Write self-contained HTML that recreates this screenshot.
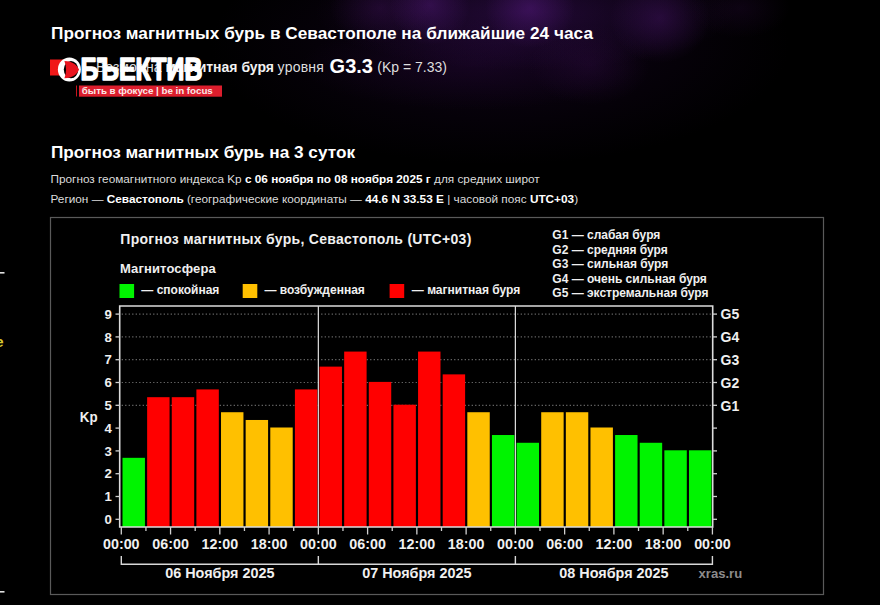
<!DOCTYPE html>
<html><head><meta charset="utf-8"><title>Прогноз магнитных бурь</title>
<style>
html,body{margin:0;padding:0;}
body{width:880px;height:605px;overflow:hidden;position:relative;background:#000;
font-family:"Liberation Sans",sans-serif;}
.bg{position:absolute;left:0;top:0;width:880px;height:605px;
background:
radial-gradient(ellipse 40px 40px at 430px 5px, rgba(105,32,155,0.35), rgba(0,0,0,0) 100%),
radial-gradient(ellipse 45px 40px at 530px 8px, rgba(105,32,155,0.35), rgba(0,0,0,0) 100%),
radial-gradient(ellipse 50px 45px at 660px 18px, rgba(85,24,125,0.35), rgba(0,0,0,0) 100%),
radial-gradient(ellipse 50px 35px at 380px 8px, rgba(75,20,105,0.3), rgba(0,0,0,0) 100%),
radial-gradient(ellipse 60px 40px at 590px 65px, rgba(50,12,72,0.35), rgba(0,0,0,0) 100%),
radial-gradient(ellipse 210px 58px at 525px 12px, rgba(72,20,112,0.38), rgba(0,0,0,0) 100%),
radial-gradient(ellipse 170px 45px at 470px 65px, rgba(40,8,60,0.35), rgba(0,0,0,0) 100%),
radial-gradient(ellipse 50px 30px at 740px 8px, rgba(35,8,50,0.35), rgba(0,0,0,0) 100%),
radial-gradient(ellipse 290px 120px at 500px 45px, rgba(30,6,48,0.45), rgba(0,0,0,0) 100%),
#000;}
svg{position:absolute;left:0;top:0;}
svg text{font-family:"Liberation Sans",sans-serif;}
</style></head>
<body><div class="bg"></div>
<svg width="880" height="605" viewBox="0 0 880 605">
<text x="51" y="39" font-size="17.2" font-weight="bold" fill="#ffffff" textLength="542" lengthAdjust="spacing">Прогноз магнитных бурь в Севастополе на ближайшие 24 часа</text>
<rect x="50" y="59.5" width="16" height="16" fill="#f01818"/>
<text x="274" y="72.3" font-size="14" font-weight="bold" fill="#f2f2f2" text-anchor="end"><tspan font-weight="normal" fill="#dedede">Возможна </tspan>магнитная буря</text>
<text x="277.6" y="72.3" font-size="14" fill="#dedede" textLength="46.2" lengthAdjust="spacing">уровня</text>
<text x="329.6" y="73.3" font-size="20" font-weight="bold" fill="#ffffff">G3.3</text>
<text x="377.3" y="72.3" font-size="14" fill="#dedede">(Kp = 7.33)</text>
<text x="51" y="157.5" font-size="17.2" font-weight="bold" fill="#ffffff" textLength="304" lengthAdjust="spacing">Прогноз магнитных бурь на 3 суток</text>
<text x="50.5" y="183.4" font-size="11.8" fill="#dcdcdc">Прогноз геомагнитного индекса Kp <tspan font-weight="bold" fill="#fff">с 06 ноября по 08 ноября 2025 г</tspan> для средних широт</text>
<text x="50.5" y="203" font-size="11.8" fill="#dcdcdc">Регион — <tspan font-weight="bold" fill="#fff">Севастополь</tspan> (географические координаты — <tspan font-weight="bold" fill="#fff">44.6 N 33.53 E</tspan> | часовой пояс <tspan font-weight="bold" fill="#fff">UTC+03</tspan>)</text>
<ellipse cx="69.4" cy="69.6" rx="11.5" ry="12" fill="#ffffff"/>
<ellipse cx="71" cy="69.6" rx="7.2" ry="8.6" fill="#000"/>
<path d="M64.4 60.9 C73 61 77.2 65.2 79 69.6 C77.2 74 73 78.2 64.4 78.3 C66.6 73 66.6 66.2 64.4 60.9 Z" fill="#e8141e"/>
<text x="80.4" y="80.3" font-size="31" font-weight="bold" fill="#ffffff" stroke="#ffffff" stroke-width="1.5" stroke-linejoin="round" textLength="122" lengthAdjust="spacingAndGlyphs">БЪЕКТИВ</text>
<rect x="76" y="85.5" width="1" height="11" fill="#c8141e"/>
<rect x="79" y="85.5" width="143" height="11.2" fill="#dc1e2d"/>
<text x="81.8" y="94.2" font-size="9.8" font-weight="bold" fill="#fbe8e8" textLength="131" lengthAdjust="spacing">быть в фокусе | be in focus</text>
<rect x="0" y="272" width="4.5" height="1.6" fill="#e0e0e0"/>
<rect x="0" y="591" width="4.5" height="1.6" fill="#e0e0e0"/>
<text x="-5" y="347" font-size="15.5" font-weight="bold" fill="#d8c830">е</text>
<rect x="50.5" y="217.5" width="773" height="377" fill="none" stroke="#5a5a5a" stroke-width="1.2"/>
<line x1="121.7" y1="405.30" x2="711.7" y2="405.30" stroke="#6e6e6e" stroke-width="1.2" stroke-dasharray="1.2 2.3"/>
<line x1="121.7" y1="382.50" x2="711.7" y2="382.50" stroke="#6e6e6e" stroke-width="1.2" stroke-dasharray="1.2 2.3"/>
<line x1="121.7" y1="359.70" x2="711.7" y2="359.70" stroke="#6e6e6e" stroke-width="1.2" stroke-dasharray="1.2 2.3"/>
<line x1="121.7" y1="336.90" x2="711.7" y2="336.90" stroke="#6e6e6e" stroke-width="1.2" stroke-dasharray="1.2 2.3"/>
<line x1="121.7" y1="314.10" x2="711.7" y2="314.10" stroke="#6e6e6e" stroke-width="1.2" stroke-dasharray="1.2 2.3"/>
<rect x="122.50" y="457.82" width="22.43" height="69.18" fill="#00f400"/>
<rect x="147.13" y="397.18" width="22.43" height="129.82" fill="#ff0000"/>
<rect x="171.76" y="397.18" width="22.43" height="129.82" fill="#ff0000"/>
<rect x="196.39" y="389.42" width="22.43" height="137.58" fill="#ff0000"/>
<rect x="221.02" y="412.22" width="22.43" height="114.78" fill="#ffc000"/>
<rect x="245.65" y="419.98" width="22.43" height="107.02" fill="#ffc000"/>
<rect x="270.28" y="427.50" width="22.43" height="99.50" fill="#ffc000"/>
<rect x="294.91" y="389.42" width="22.43" height="137.58" fill="#ff0000"/>
<rect x="319.54" y="366.62" width="22.43" height="160.38" fill="#ff0000"/>
<rect x="344.17" y="351.58" width="22.43" height="175.42" fill="#ff0000"/>
<rect x="368.80" y="381.90" width="22.43" height="145.10" fill="#ff0000"/>
<rect x="393.43" y="404.70" width="22.43" height="122.30" fill="#ff0000"/>
<rect x="418.06" y="351.58" width="22.43" height="175.42" fill="#ff0000"/>
<rect x="442.69" y="374.38" width="22.43" height="152.62" fill="#ff0000"/>
<rect x="467.32" y="412.22" width="22.43" height="114.78" fill="#ffc000"/>
<rect x="491.95" y="435.02" width="22.43" height="91.98" fill="#00f400"/>
<rect x="516.58" y="442.78" width="22.43" height="84.22" fill="#00f400"/>
<rect x="541.21" y="412.22" width="22.43" height="114.78" fill="#ffc000"/>
<rect x="565.84" y="412.22" width="22.43" height="114.78" fill="#ffc000"/>
<rect x="590.47" y="427.50" width="22.43" height="99.50" fill="#ffc000"/>
<rect x="615.10" y="435.02" width="22.43" height="91.98" fill="#00f400"/>
<rect x="639.73" y="442.78" width="22.43" height="84.22" fill="#00f400"/>
<rect x="664.36" y="450.30" width="22.43" height="76.70" fill="#00f400"/>
<rect x="688.99" y="450.30" width="22.43" height="76.70" fill="#00f400"/>
<line x1="318.34" y1="306" x2="318.34" y2="527" stroke="#e0e0e0" stroke-width="1.2"/>
<line x1="515.38" y1="306" x2="515.38" y2="527" stroke="#e0e0e0" stroke-width="1.2"/>
<path d="M119.7 527 V306 H712.7 V527 Z" fill="none" stroke="#dcdcdc" stroke-width="1.6"/>
<line x1="115.5" y1="519.30" x2="119.7" y2="519.30" stroke="#cfcfcf" stroke-width="1.3"/>
<line x1="712.7" y1="519.30" x2="717" y2="519.30" stroke="#cfcfcf" stroke-width="1.3"/>
<text x="111.8" y="524.00" text-anchor="end" font-size="13.2" font-weight="bold" fill="#f0f0f0">0</text>
<line x1="115.5" y1="496.50" x2="119.7" y2="496.50" stroke="#cfcfcf" stroke-width="1.3"/>
<line x1="712.7" y1="496.50" x2="717" y2="496.50" stroke="#cfcfcf" stroke-width="1.3"/>
<text x="111.8" y="501.20" text-anchor="end" font-size="13.2" font-weight="bold" fill="#f0f0f0">1</text>
<line x1="115.5" y1="473.70" x2="119.7" y2="473.70" stroke="#cfcfcf" stroke-width="1.3"/>
<line x1="712.7" y1="473.70" x2="717" y2="473.70" stroke="#cfcfcf" stroke-width="1.3"/>
<text x="111.8" y="478.40" text-anchor="end" font-size="13.2" font-weight="bold" fill="#f0f0f0">2</text>
<line x1="115.5" y1="450.90" x2="119.7" y2="450.90" stroke="#cfcfcf" stroke-width="1.3"/>
<line x1="712.7" y1="450.90" x2="717" y2="450.90" stroke="#cfcfcf" stroke-width="1.3"/>
<text x="111.8" y="455.60" text-anchor="end" font-size="13.2" font-weight="bold" fill="#f0f0f0">3</text>
<line x1="115.5" y1="428.10" x2="119.7" y2="428.10" stroke="#cfcfcf" stroke-width="1.3"/>
<line x1="712.7" y1="428.10" x2="717" y2="428.10" stroke="#cfcfcf" stroke-width="1.3"/>
<text x="111.8" y="432.80" text-anchor="end" font-size="13.2" font-weight="bold" fill="#f0f0f0">4</text>
<line x1="115.5" y1="405.30" x2="119.7" y2="405.30" stroke="#cfcfcf" stroke-width="1.3"/>
<line x1="712.7" y1="405.30" x2="717" y2="405.30" stroke="#cfcfcf" stroke-width="1.3"/>
<text x="111.8" y="410.00" text-anchor="end" font-size="13.2" font-weight="bold" fill="#f0f0f0">5</text>
<line x1="115.5" y1="382.50" x2="119.7" y2="382.50" stroke="#cfcfcf" stroke-width="1.3"/>
<line x1="712.7" y1="382.50" x2="717" y2="382.50" stroke="#cfcfcf" stroke-width="1.3"/>
<text x="111.8" y="387.20" text-anchor="end" font-size="13.2" font-weight="bold" fill="#f0f0f0">6</text>
<line x1="115.5" y1="359.70" x2="119.7" y2="359.70" stroke="#cfcfcf" stroke-width="1.3"/>
<line x1="712.7" y1="359.70" x2="717" y2="359.70" stroke="#cfcfcf" stroke-width="1.3"/>
<text x="111.8" y="364.40" text-anchor="end" font-size="13.2" font-weight="bold" fill="#f0f0f0">7</text>
<line x1="115.5" y1="336.90" x2="119.7" y2="336.90" stroke="#cfcfcf" stroke-width="1.3"/>
<line x1="712.7" y1="336.90" x2="717" y2="336.90" stroke="#cfcfcf" stroke-width="1.3"/>
<text x="111.8" y="341.60" text-anchor="end" font-size="13.2" font-weight="bold" fill="#f0f0f0">8</text>
<line x1="115.5" y1="314.10" x2="119.7" y2="314.10" stroke="#cfcfcf" stroke-width="1.3"/>
<line x1="712.7" y1="314.10" x2="717" y2="314.10" stroke="#cfcfcf" stroke-width="1.3"/>
<text x="111.8" y="318.80" text-anchor="end" font-size="13.2" font-weight="bold" fill="#f0f0f0">9</text>
<text x="720.5" y="410.50" font-size="14" font-weight="bold" fill="#f0f0f0">G1</text>
<text x="720.5" y="387.70" font-size="14" font-weight="bold" fill="#f0f0f0">G2</text>
<text x="720.5" y="364.90" font-size="14" font-weight="bold" fill="#f0f0f0">G3</text>
<text x="720.5" y="342.10" font-size="14" font-weight="bold" fill="#f0f0f0">G4</text>
<text x="720.5" y="319.30" font-size="14" font-weight="bold" fill="#f0f0f0">G5</text>
<text x="79.8" y="422" font-size="14.2" font-weight="bold" fill="#f0f0f0" textLength="17.8" lengthAdjust="spacingAndGlyphs">Kp</text>
<line x1="121.30" y1="527" x2="121.30" y2="534.5" stroke="#d0d0d0" stroke-width="1.3"/>
<line x1="145.93" y1="527" x2="145.93" y2="531" stroke="#d0d0d0" stroke-width="1.3"/>
<line x1="170.56" y1="527" x2="170.56" y2="534.5" stroke="#d0d0d0" stroke-width="1.3"/>
<line x1="195.19" y1="527" x2="195.19" y2="531" stroke="#d0d0d0" stroke-width="1.3"/>
<line x1="219.82" y1="527" x2="219.82" y2="534.5" stroke="#d0d0d0" stroke-width="1.3"/>
<line x1="244.45" y1="527" x2="244.45" y2="531" stroke="#d0d0d0" stroke-width="1.3"/>
<line x1="269.08" y1="527" x2="269.08" y2="534.5" stroke="#d0d0d0" stroke-width="1.3"/>
<line x1="293.71" y1="527" x2="293.71" y2="531" stroke="#d0d0d0" stroke-width="1.3"/>
<line x1="318.34" y1="527" x2="318.34" y2="534.5" stroke="#d0d0d0" stroke-width="1.3"/>
<line x1="342.97" y1="527" x2="342.97" y2="531" stroke="#d0d0d0" stroke-width="1.3"/>
<line x1="367.60" y1="527" x2="367.60" y2="534.5" stroke="#d0d0d0" stroke-width="1.3"/>
<line x1="392.23" y1="527" x2="392.23" y2="531" stroke="#d0d0d0" stroke-width="1.3"/>
<line x1="416.86" y1="527" x2="416.86" y2="534.5" stroke="#d0d0d0" stroke-width="1.3"/>
<line x1="441.49" y1="527" x2="441.49" y2="531" stroke="#d0d0d0" stroke-width="1.3"/>
<line x1="466.12" y1="527" x2="466.12" y2="534.5" stroke="#d0d0d0" stroke-width="1.3"/>
<line x1="490.75" y1="527" x2="490.75" y2="531" stroke="#d0d0d0" stroke-width="1.3"/>
<line x1="515.38" y1="527" x2="515.38" y2="534.5" stroke="#d0d0d0" stroke-width="1.3"/>
<line x1="540.01" y1="527" x2="540.01" y2="531" stroke="#d0d0d0" stroke-width="1.3"/>
<line x1="564.64" y1="527" x2="564.64" y2="534.5" stroke="#d0d0d0" stroke-width="1.3"/>
<line x1="589.27" y1="527" x2="589.27" y2="531" stroke="#d0d0d0" stroke-width="1.3"/>
<line x1="613.90" y1="527" x2="613.90" y2="534.5" stroke="#d0d0d0" stroke-width="1.3"/>
<line x1="638.53" y1="527" x2="638.53" y2="531" stroke="#d0d0d0" stroke-width="1.3"/>
<line x1="663.16" y1="527" x2="663.16" y2="534.5" stroke="#d0d0d0" stroke-width="1.3"/>
<line x1="687.79" y1="527" x2="687.79" y2="531" stroke="#d0d0d0" stroke-width="1.3"/>
<line x1="712.42" y1="527" x2="712.42" y2="534.5" stroke="#d0d0d0" stroke-width="1.3"/>
<text x="121.30" y="548.9" text-anchor="middle" font-size="14.3" font-weight="bold" fill="#f0f0f0">00:00</text>
<text x="170.56" y="548.9" text-anchor="middle" font-size="14.3" font-weight="bold" fill="#f0f0f0">06:00</text>
<text x="219.82" y="548.9" text-anchor="middle" font-size="14.3" font-weight="bold" fill="#f0f0f0">12:00</text>
<text x="269.08" y="548.9" text-anchor="middle" font-size="14.3" font-weight="bold" fill="#f0f0f0">18:00</text>
<text x="318.34" y="548.9" text-anchor="middle" font-size="14.3" font-weight="bold" fill="#f0f0f0">00:00</text>
<text x="367.60" y="548.9" text-anchor="middle" font-size="14.3" font-weight="bold" fill="#f0f0f0">06:00</text>
<text x="416.86" y="548.9" text-anchor="middle" font-size="14.3" font-weight="bold" fill="#f0f0f0">12:00</text>
<text x="466.12" y="548.9" text-anchor="middle" font-size="14.3" font-weight="bold" fill="#f0f0f0">18:00</text>
<text x="515.38" y="548.9" text-anchor="middle" font-size="14.3" font-weight="bold" fill="#f0f0f0">00:00</text>
<text x="564.64" y="548.9" text-anchor="middle" font-size="14.3" font-weight="bold" fill="#f0f0f0">06:00</text>
<text x="613.90" y="548.9" text-anchor="middle" font-size="14.3" font-weight="bold" fill="#f0f0f0">12:00</text>
<text x="663.16" y="548.9" text-anchor="middle" font-size="14.3" font-weight="bold" fill="#f0f0f0">18:00</text>
<text x="712.42" y="548.9" text-anchor="middle" font-size="14.3" font-weight="bold" fill="#f0f0f0">00:00</text>
<path d="M121.30 556 V564.3 H712.42 V556 M318.34 556 V564.3 M515.38 556 V564.3" fill="none" stroke="#d8d8d8" stroke-width="1.4"/>
<text x="219.82" y="578" text-anchor="middle" font-size="14.4" font-weight="bold" fill="#f0f0f0">06 Ноября 2025</text>
<text x="416.86" y="578" text-anchor="middle" font-size="14.4" font-weight="bold" fill="#f0f0f0">07 Ноября 2025</text>
<text x="613.90" y="578" text-anchor="middle" font-size="14.4" font-weight="bold" fill="#f0f0f0">08 Ноября 2025</text>
<text x="698.5" y="577.5" font-size="13.1" font-weight="bold" fill="#8c8c8c">xras.ru</text>
<text x="120.3" y="244.2" font-size="14" font-weight="bold" fill="#f0f0f0" textLength="351" lengthAdjust="spacing">Прогноз магнитных бурь, Севастополь (UTC+03)</text>
<text x="120" y="272.7" font-size="13" font-weight="bold" fill="#f0f0f0" textLength="95.7" lengthAdjust="spacing">Магнитосфера</text>
<rect x="119.5" y="284" width="14.6" height="14" fill="#00f400"/>
<text x="141.3" y="294" font-size="12" font-weight="bold" fill="#f0f0f0">— спокойная</text>
<rect x="242.7" y="284" width="14.6" height="14" fill="#ffc000"/>
<text x="264.4" y="294" font-size="12" font-weight="bold" fill="#f0f0f0">— возбужденная</text>
<rect x="389.6" y="284" width="14.6" height="14" fill="#ff0000"/>
<text x="411.8" y="294" font-size="12" font-weight="bold" fill="#f0f0f0">— магнитная буря</text>
<text x="552.3" y="239.00" font-size="12" font-weight="bold" fill="#f0f0f0">G1 — слабая буря</text>
<text x="552.3" y="253.60" font-size="12" font-weight="bold" fill="#f0f0f0">G2 — средняя буря</text>
<text x="552.3" y="268.20" font-size="12" font-weight="bold" fill="#f0f0f0">G3 — сильная буря</text>
<text x="552.3" y="282.80" font-size="12" font-weight="bold" fill="#f0f0f0">G4 — очень сильная буря</text>
<text x="552.3" y="297.40" font-size="12" font-weight="bold" fill="#f0f0f0">G5 — экстремальная буря</text>
</svg>
</body></html>
